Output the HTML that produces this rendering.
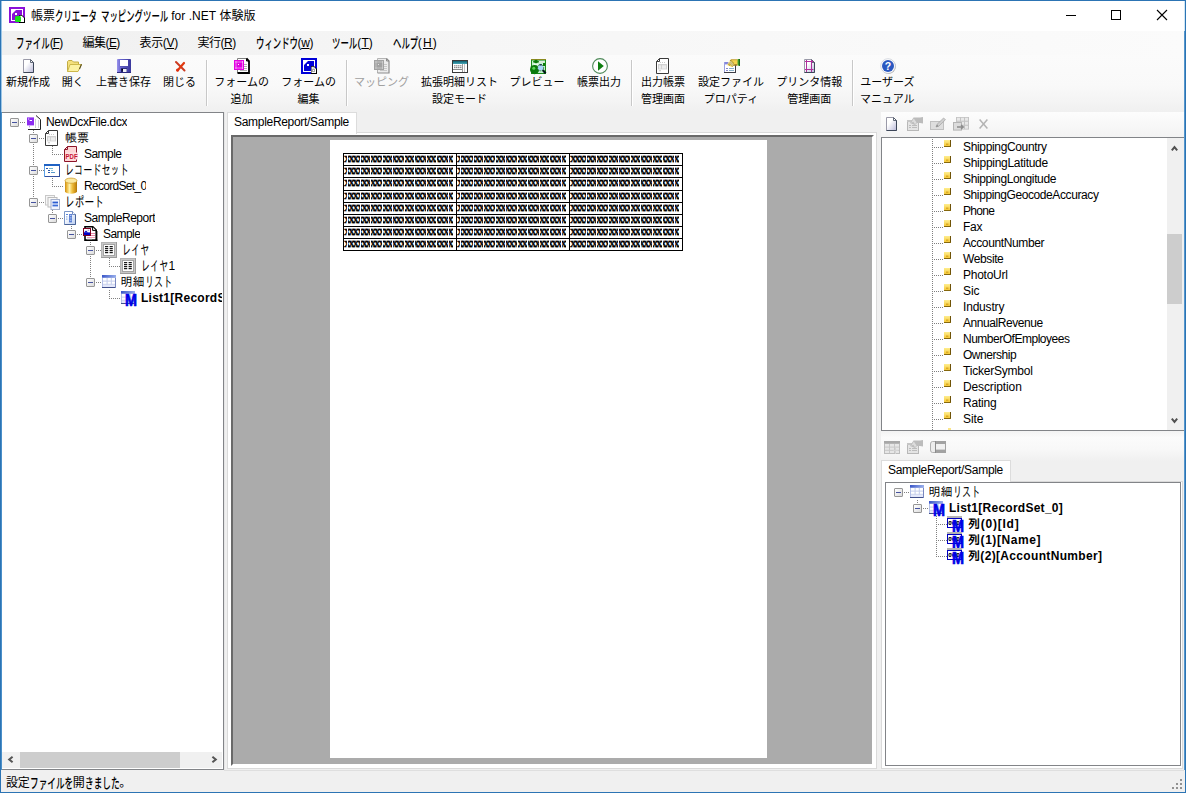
<!DOCTYPE html>
<html lang="ja"><head><meta charset="utf-8"><title>帳票クリエータ マッピングツール for .NET 体験版</title>
<style>
*{box-sizing:border-box;margin:0;padding:0}
html,body{width:1186px;height:793px;overflow:hidden;background:#f0f0f0}
body{position:relative;font-family:"Liberation Sans","Noto Sans CJK JP",sans-serif;font-size:12px;color:#000}
.a{position:absolute}
.t{position:absolute;white-space:nowrap;line-height:16px;height:16px}
.ui{font-family:"Liberation Sans","Noto Sans CJK JP",sans-serif;font-size:12px}
.km{font-weight:500}
.tb{font-family:"Liberation Sans","Noto Sans CJK JP",sans-serif;font-size:11px}
.g{font-family:"Liberation Sans","IPAGothic","Noto Sans CJK JP",sans-serif;font-size:12px}
.b{font-weight:bold}
.k{display:inline-block;transform-origin:0 50%;letter-spacing:0}
u{text-decoration:underline;text-underline-offset:1px}
svg{position:absolute;overflow:visible}
.dot-h{position:absolute;height:1px;background-image:linear-gradient(90deg,#808080 50%,transparent 50%);background-size:2px 1px}
.dot-v{position:absolute;width:1px;background-image:linear-gradient(180deg,#808080 50%,transparent 50%);background-size:1px 2px}
.exp{position:absolute;width:9px;height:9px;border:1px solid #969696;background:linear-gradient(135deg,#fff,#dcdcdc);border-radius:1px}
.xc{position:absolute;height:10px;overflow:hidden;white-space:nowrap;font-family:"Liberation Serif",serif;font-weight:bold;font-size:9px;line-height:9px;letter-spacing:-2.2px;color:#000;-webkit-text-stroke:.4px #000}
.xc:after{content:"";position:absolute;left:0;top:0;right:0;bottom:0;background:repeating-linear-gradient(90deg,transparent 0,transparent 3.5px,#fff 3.5px,#fff 4.5px,transparent 4.5px,transparent 16px,#fff 16px,#fff 17px,transparent 17px,transparent 22.1px)}
.exp:after{content:"";position:absolute;left:1px;top:3px;width:5px;height:1px;background:#46539f}
</style></head>
<body>
<div class="a" style="left:0px;top:0px;width:1186px;height:793px;background:#f0f0f0;border:1px solid #2c74b4;"></div>
<div class="a" style="left:1px;top:1px;width:1184px;height:791px;background:transparent;border:1px solid #d9f3fc;border-top:none;border-bottom-color:#b4daf2;"></div>
<div class="a" style="left:1px;top:1px;width:1184px;height:30px;background:#fff;"></div>
<svg style="left:9px;top:7px" width="16" height="16" viewBox="0 0 16 16"><rect x="0" y="0" width="16" height="16" fill="#8a10d8"/><rect x="2" y="2" width="12" height="12" fill="#fff"/><rect x="3" y="3" width="10" height="10" fill="#8a10d8"/><path d="M3 3h4l-4 4z" fill="#fff"/><rect x="6" y="6" width="2" height="2" fill="#fff"/><path d="M10 8h3l3 3v5h-6z" fill="#000"/><path d="M10.5 8.8h2.2l2.3 2.3v4h-4.5z" fill="#fff"/><rect x="6" y="9" width="6" height="6" rx="1.5" fill="#18e018"/></svg>
<div class="t ui" style="left:31px;top:8px;letter-spacing:0.055px;">帳票<span class="k km" style="transform:translateY(0.3px) scale(0.7,1.15);margin-right:-18.00px">クリエータ</span> <span class="k km" style="transform:translateY(0.3px) scale(0.7,1.15);margin-right:-28.80px">マッピングツール</span> for .NET 体験版</div>
<svg style="left:1066px;top:10px" width="56" height="10" viewBox="0 0 56 10" shape-rendering="crispEdges"><rect x="0" y="5" width="10" height="1" fill="#000"/><rect x="45.5" y="0.5" width="9" height="9" fill="none" stroke="#000"/></svg>
<svg style="left:1157px;top:10px" width="10" height="10" viewBox="0 0 10 10"><path d="M0 0L10 10M10 0L0 10" stroke="#000" stroke-width="1.1"/></svg>
<div class="a" style="left:1px;top:31px;width:1184px;height:24px;background:linear-gradient(90deg,#f0f0f0,#f6f6f6 40%,#fbfbfb);"></div>
<div class="t ui" style="left:16px;top:35px;letter-spacing:-0.823px;"><span class="k km" style="transform:translateY(0.3px) scale(0.7,1.15);margin-right:-14.40px">ファイル</span>(<u>F</u>)</div>
<div class="t ui" style="left:82.5px;top:35px;letter-spacing:-0.543px;">編集(<u>E</u>)</div>
<div class="t ui" style="left:139.5px;top:35px;letter-spacing:-0.343px;">表示(<u>V</u>)</div>
<div class="t ui" style="left:197.5px;top:35px;letter-spacing:-0.474px;">実行(<u>R</u>)</div>
<div class="t ui" style="left:255.5px;top:35px;letter-spacing:-0.362px;"><span class="k km" style="transform:translateY(0.3px) scale(0.7,1.15);margin-right:-18.00px">ウィンドウ</span>(<u>w</u>)</div>
<div class="t ui" style="left:332px;top:35px;letter-spacing:0.146px;"><span class="k km" style="transform:translateY(0.3px) scale(0.7,1.15);margin-right:-10.80px">ツール</span>(<u>T</u>)</div>
<div class="t ui" style="left:392.5px;top:35px;letter-spacing:1.203px;"><span class="k km" style="transform:translateY(0.3px) scale(0.7,1.15);margin-right:-10.80px">ヘルプ</span>(<u>H</u>)</div>
<div class="a" style="left:1px;top:55px;width:1184px;height:56px;background:linear-gradient(#fbfbfb,#f9f9f9 55%,#f4f4f4 82%,#f0f0f0);"></div>
<div class="a" style="left:206px;top:60px;width:1px;height:46px;background:#c8c8c8;"></div>
<div class="a" style="left:207px;top:60px;width:1px;height:46px;background:#ffffff;"></div>
<div class="a" style="left:346px;top:60px;width:1px;height:46px;background:#c8c8c8;"></div>
<div class="a" style="left:347px;top:60px;width:1px;height:46px;background:#ffffff;"></div>
<div class="a" style="left:631px;top:60px;width:1px;height:46px;background:#c8c8c8;"></div>
<div class="a" style="left:632px;top:60px;width:1px;height:46px;background:#ffffff;"></div>
<div class="a" style="left:852px;top:60px;width:1px;height:46px;background:#c8c8c8;"></div>
<div class="a" style="left:853px;top:60px;width:1px;height:46px;background:#ffffff;"></div>
<div class="t tb" style="left:-32px;top:74px;width:120px;text-align:center;">新規作成</div>
<svg style="left:23px;top:59px" width="11" height="14" viewBox="0 0 11 14"><defs><linearGradient id="gn1" x1="0" y1="0" x2="1" y2="1"><stop offset="0.35" stop-color="#fff"/><stop offset="1" stop-color="#b8b8d8"/></linearGradient></defs><path d="M0.5 0.5H7.5L10.5 3.5V13.5H0.5Z" fill="url(#gn1)" stroke="#9a9aa8"/><path d="M7.5 0.5L10.5 3.5V13.5H0.5" fill="none" stroke="#3c4658"/><path d="M7.5 1v2.5H10" fill="#fff" stroke="#3c4658" stroke-width=".8"/></svg>
<div class="t tb" style="left:12.700000000000003px;top:74px;width:120px;text-align:center;">開く</div>
<svg style="left:67px;top:60px" width="15" height="12" viewBox="0 0 15 12"><path d="M0.5 11.5V1.5L1.5 0.5H5L6.5 2H11.5V4" fill="#f4e07c" stroke="#c2ac44"/><path d="M0.5 11.5L3 4.5H14.5L11 11.5Z" fill="#fcf2a2" stroke="#cdb84a"/><path d="M14.5 4.2L12.5 9" stroke="#5a5020" stroke-width="1.1"/></svg>
<div class="t tb" style="left:63.5px;top:74px;width:120px;text-align:center;">上書き保存</div>
<svg style="left:117px;top:59px" width="14" height="14" viewBox="0 0 14 14"><defs><linearGradient id="gs1" x1="0" y1="0" x2="1" y2="0"><stop offset="0" stop-color="#9a94ec"/><stop offset="0.25" stop-color="#6a66d0"/><stop offset="1" stop-color="#3a389c"/></linearGradient></defs><rect x="0" y="0" width="14" height="14" rx="0.8" fill="url(#gs1)"/><rect x="0" y="13" width="14" height="1" fill="#2c2a80"/><rect x="3" y="1" width="8" height="6" fill="#fff"/><rect x="3" y="7" width="8" height="0.6" fill="#5050b0"/><rect x="4" y="9.3" width="6" height="3.7" fill="#20206a"/><rect x="6" y="10" width="3.6" height="3" fill="#f0f0f8"/><rect x="4.6" y="9.8" width="1.4" height="1.6" fill="#000"/></svg>
<div class="t tb" style="left:119.6px;top:74px;width:120px;text-align:center;">閉じる</div>
<svg style="left:175px;top:61px" width="10" height="11" viewBox="0 0 10 11"><path d="M1 1L9.5 9.5" stroke="#cc3a20" stroke-width="2" stroke-linecap="round"/><path d="M9 2L2.5 9.5" stroke="#e03a10" stroke-width="2.2" stroke-linecap="round"/><circle cx="2.6" cy="9" r="1.6" fill="#e03010"/></svg>
<div class="t tb" style="left:181.6px;top:74px;width:120px;text-align:center;">フォームの</div>
<div class="t tb" style="left:181.6px;top:91px;width:120px;text-align:center;">追加</div>
<svg style="left:234px;top:58px" width="16" height="16" viewBox="0 0 16 16"><path d="M3.5 0.5H12.5L15 3V15H3.5Z" fill="#fff"/><path d="M3.5 15V0.5H12.5" fill="none" stroke="#808080"/><path d="M12.5 0.5L15 3V15H3.5" fill="none" stroke="#000" stroke-width="1.8"/><path d="M12.5 0.5V3H15" fill="none" stroke="#000"/><rect x="10" y="6" width="3" height="1" fill="#b0b0b0"/><rect x="10" y="8" width="3" height="1" fill="#b0b0b0"/><rect x="10" y="10" width="3" height="1" fill="#b0b0b0"/><rect x="10" y="12" width="3" height="1" fill="#b0b0b0"/><rect x="6" y="12" width="4" height="1" fill="#b0b0b0"/><rect x="0" y="2" width="10" height="10" fill="#e200e2"/><rect x="1.5" y="3.5" width="1" height="1" fill="#fff"/><rect x="1.5" y="9.5" width="1" height="1" fill="#fff"/><rect x="1.5" y="3.5" width="1" height="1" fill="#fff"/><rect x="8" y="3.5" width="1" height="1" fill="#fff"/><rect x="3.5" y="3.5" width="1" height="1" fill="#fff"/><rect x="3.5" y="9.5" width="1" height="1" fill="#fff"/><rect x="1.5" y="5.5" width="1" height="1" fill="#fff"/><rect x="8" y="5.5" width="1" height="1" fill="#fff"/><rect x="5.5" y="3.5" width="1" height="1" fill="#fff"/><rect x="5.5" y="9.5" width="1" height="1" fill="#fff"/><rect x="1.5" y="7.5" width="1" height="1" fill="#fff"/><rect x="8" y="7.5" width="1" height="1" fill="#fff"/><rect x="7.5" y="3.5" width="1" height="1" fill="#fff"/><rect x="7.5" y="9.5" width="1" height="1" fill="#fff"/><rect x="1.5" y="9.5" width="1" height="1" fill="#fff"/><rect x="8" y="9.5" width="1" height="1" fill="#fff"/><rect x="4" y="6" width="1" height="1" fill="#fff"/></svg>
<div class="t tb" style="left:248.60000000000002px;top:74px;width:120px;text-align:center;">フォームの</div>
<div class="t tb" style="left:248.60000000000002px;top:91px;width:120px;text-align:center;">編集</div>
<svg style="left:301px;top:58px" width="16" height="16" viewBox="0 0 16 16"><rect x="0" y="0" width="16" height="16" fill="#0000d8"/><rect x="2" y="2" width="12" height="12" fill="#fff"/><rect x="3" y="3" width="10" height="10" fill="#0000d8"/><path d="M3 3h4l-4 4z" fill="#fff"/><rect x="6" y="6" width="2" height="2" fill="#fff"/><path d="M10 8h3l3 3v5h-6z" fill="#000"/><path d="M10.5 8.8h2.2l2.3 2.3v4h-4.5z" fill="#fff"/><rect x="11" y="11" width="3" height="3" fill="#a8a8a8"/><rect x="12" y="12" width="1" height="1" fill="#fff"/><rect x="11.5" y="9.5" width="2" height="1" fill="#a8a8a8"/></svg>
<div class="t tb" style="left:321.6px;top:74px;width:120px;text-align:center;color:#a0a0a0;">マッピング</div>
<svg style="left:374px;top:58px" width="16" height="16" viewBox="0 0 16 16"><path d="M3.5 0.5H12.5L15 3V15H3.5Z" fill="#ececec"/><path d="M3.5 15V0.5H12.5" fill="none" stroke="#b4b4b4"/><path d="M12.5 0.5L15 3V15H3.5" fill="none" stroke="#8c8c8c" stroke-width="1.2"/><path d="M12.5 0.5V3H15" fill="none" stroke="#8c8c8c"/><rect x="10" y="6" width="3" height="1" fill="#c8c8c8"/><rect x="10" y="8" width="3" height="1" fill="#c8c8c8"/><rect x="10" y="10" width="3" height="1" fill="#c8c8c8"/><rect x="10" y="12" width="3" height="1" fill="#c8c8c8"/><rect x="6" y="12" width="4" height="1" fill="#c8c8c8"/><rect x="0" y="2" width="10" height="10" fill="#a2a2a2"/><rect x="1.5" y="3.5" width="1" height="1" fill="#e4e4e4"/><rect x="1.5" y="9.5" width="1" height="1" fill="#e4e4e4"/><rect x="1.5" y="3.5" width="1" height="1" fill="#e4e4e4"/><rect x="8" y="3.5" width="1" height="1" fill="#e4e4e4"/><rect x="3.5" y="3.5" width="1" height="1" fill="#e4e4e4"/><rect x="3.5" y="9.5" width="1" height="1" fill="#e4e4e4"/><rect x="1.5" y="5.5" width="1" height="1" fill="#e4e4e4"/><rect x="8" y="5.5" width="1" height="1" fill="#e4e4e4"/><rect x="5.5" y="3.5" width="1" height="1" fill="#e4e4e4"/><rect x="5.5" y="9.5" width="1" height="1" fill="#e4e4e4"/><rect x="1.5" y="7.5" width="1" height="1" fill="#e4e4e4"/><rect x="8" y="7.5" width="1" height="1" fill="#e4e4e4"/><rect x="7.5" y="3.5" width="1" height="1" fill="#e4e4e4"/><rect x="7.5" y="9.5" width="1" height="1" fill="#e4e4e4"/><rect x="1.5" y="9.5" width="1" height="1" fill="#e4e4e4"/><rect x="8" y="9.5" width="1" height="1" fill="#e4e4e4"/><rect x="4" y="6" width="1" height="1" fill="#e4e4e4"/></svg>
<div class="t tb" style="left:399.4px;top:74px;width:120px;text-align:center;">拡張明細リスト</div>
<div class="t tb" style="left:399.4px;top:91px;width:120px;text-align:center;">設定モード</div>
<svg style="left:452px;top:60px" width="16" height="13" viewBox="0 0 16 13"><defs><linearGradient id="ge1" x1="0" y1="0" x2="0" y2="1"><stop offset="0" stop-color="#0f5f70"/><stop offset="1" stop-color="#48a8b8"/></linearGradient></defs><rect x="0" y="0" width="16" height="13" fill="#3a3a3a"/><rect x="1" y="1" width="14" height="3" fill="url(#ge1)"/><rect x="1" y="4" width="14" height="8" fill="#fff"/><rect x="1" y="9" width="10" height="1" fill="#8a8a8a"/><rect x="10" y="4" width="1" height="8" fill="#9a9a9a"/><rect x="12" y="4" width="1" height="8" fill="#c0c0c0"/><rect x="2.2" y="5.2" width="1.2" height="1.2" fill="#707070"/><rect x="2.2" y="7" width="1.2" height="1.2" fill="#707070"/><rect x="4.2" y="5.2" width="1.2" height="1.2" fill="#707070"/><rect x="4.2" y="7" width="1.2" height="1.2" fill="#707070"/><rect x="6.2" y="5.2" width="1.2" height="1.2" fill="#707070"/><rect x="6.2" y="7" width="1.2" height="1.2" fill="#707070"/><rect x="8.2" y="5.2" width="1.2" height="1.2" fill="#707070"/><rect x="8.2" y="7" width="1.2" height="1.2" fill="#707070"/></svg>
<div class="t tb" style="left:477.1px;top:74px;width:120px;text-align:center;">プレビュー</div>
<svg style="left:530px;top:59px" width="16" height="15" viewBox="0 0 16 15"><rect x="1" y="0" width="15" height="15" fill="#1a8a1a"/><rect x="2" y="1.5" width="13" height="12.5" fill="#c4f4d0"/><rect x="1" y="0" width="15" height="1" fill="#8a8a20"/><rect x="9" y="2" width="5" height="1.5" fill="#e0e8e0"/><circle cx="6" cy="2.6" r="1.9" fill="#0c7a0c"/><rect x="3" y="2.2" width="6" height="1.2" fill="#0c7a0c"/><rect x="4" y="4.6" width="4" height="1" fill="#fff"/><circle cx="4.6" cy="10.6" r="4.6" fill="#0c7a0c"/><circle cx="3.8" cy="9.2" r="1.5" fill="#58d858"/><circle cx="10.6" cy="8.8" r="3" fill="#a8d4fa" stroke="#0c600c" stroke-width=".8" stroke-dasharray="1.2 1"/><rect x="9.2" y="5.3" width="2.8" height="1" fill="#001030"/><path d="M12.8 11L15.6 14.4" stroke="#001818" stroke-width="2.2"/><rect x="13" y="4" width="2" height="3" fill="#0c7a0c"/></svg>
<div class="t tb" style="left:539px;top:74px;width:120px;text-align:center;">帳票出力</div>
<svg style="left:592px;top:58px" width="16" height="16" viewBox="0 0 16 16"><circle cx="8" cy="8" r="7.4" fill="#fff" stroke="#4f8a5a" stroke-width="1.1"/><path d="M6 3.2V12.8L11.8 8Z" fill="#0f7f10"/></svg>
<div class="t tb" style="left:603px;top:74px;width:120px;text-align:center;">出力帳票</div>
<div class="t tb" style="left:603px;top:91px;width:120px;text-align:center;">管理画面</div>
<svg style="left:656px;top:58px" width="13" height="16" viewBox="0 0 13 16"><path d="M3.5 0.5H12.5V15.5H0.5V3.5Z" fill="#fff" stroke="#3a3a3a"/><path d="M3.5 0.5V3.5H0.5" fill="none" stroke="#3a3a3a"/><rect x="2" y="6" width="9" height="5.4" fill="#d2d2d2"/><rect x="3" y="7.6" width="2" height="1" fill="#fff"/><rect x="6" y="7.6" width="4" height="1" fill="#fff"/><rect x="3" y="9.4" width="2" height="1" fill="#fff"/><rect x="6" y="9.4" width="4" height="1" fill="#fff"/><rect x="4" y="4" width="1" height="0.8" fill="#c0c0c0"/><rect x="6" y="4" width="1" height="0.8" fill="#c0c0c0"/><rect x="8" y="4" width="1" height="0.8" fill="#c0c0c0"/><rect x="3" y="12.4" width="2" height="0.8" fill="#b8b8b8"/></svg>
<div class="t tb" style="left:671px;top:74px;width:120px;text-align:center;">設定ファイル</div>
<div class="t tb" style="left:671px;top:91px;width:120px;text-align:center;">プロパティ</div>
<svg style="left:724px;top:59px" width="16" height="14" viewBox="0 0 16 14"><rect x="0" y="3" width="12" height="11" fill="#fff"/><rect x="0" y="3" width="12" height="2.4" fill="#8486dc"/><rect x="0" y="3" width="1" height="11" fill="#9aa0e0"/><rect x="11" y="5" width="1" height="9" fill="#3c3c44"/><rect x="0" y="13" width="12" height="1" fill="#3c3c44"/><rect x="2" y="9" width="2" height="1" fill="#8a8ac8"/><rect x="5" y="9" width="5" height="1" fill="#8ab0c8"/><rect x="2" y="11" width="2" height="1" fill="#8a8ac8"/><rect x="5" y="11" width="5" height="1" fill="#8ab0c8"/><path d="M3 6L6.5 0.4H13L14 0.2V6.6L13 6.4H10L8 8Z" fill="#f4d24e"/><path d="M7 0.4H13V1.2H7Z" fill="#b89030"/><path d="M9.6 6.4H13V5.6H10.4Z" fill="#6a4a10"/><path d="M3 6L6.2 0.8L9.6 5.4L8 7.6L6 4.6Z" fill="#fff4c0"/><rect x="4" y="4.6" width="0.9" height="0.9" fill="#8a7a20"/><rect x="5" y="3.6" width="0.9" height="0.9" fill="#8a7a20"/><rect x="6" y="2.6" width="0.9" height="0.9" fill="#8a7a20"/><rect x="5" y="5.6" width="0.9" height="0.9" fill="#8a7a20"/><rect x="6" y="4.6" width="0.9" height="0.9" fill="#8a7a20"/><rect x="7" y="3.6" width="0.9" height="0.9" fill="#8a7a20"/><rect x="7" y="1.6" width="0.9" height="0.9" fill="#8a7a20"/><rect x="8" y="2.6" width="0.9" height="0.9" fill="#8a7a20"/><rect x="6" y="0.9999999999999999" width="0.9" height="0.9" fill="#8a7a20"/><rect x="7" y="5.6" width="0.9" height="0.9" fill="#8a7a20"/><rect x="8" y="4.6" width="0.9" height="0.9" fill="#8a7a20"/><rect x="9" y="3.6" width="0.9" height="0.9" fill="#8a7a20"/><rect x="8" y="6.6" width="0.9" height="0.9" fill="#8a7a20"/><rect x="9" y="5.6" width="0.9" height="0.9" fill="#8a7a20"/><path d="M13.6 0L16 0V7L13.6 6.6Z" fill="#3a9a2a"/><path d="M15.2 0H16V7H15.2Z" fill="#1c5c18"/></svg>
<div class="t tb" style="left:749.2px;top:74px;width:120px;text-align:center;">プリンタ情報</div>
<div class="t tb" style="left:749.2px;top:91px;width:120px;text-align:center;">管理画面</div>
<svg style="left:804px;top:59px" width="11" height="14" viewBox="0 0 11 14"><defs><linearGradient id="gn2" x1="0" y1="0" x2="1" y2="1"><stop offset="0.35" stop-color="#fff"/><stop offset="1" stop-color="#b8b8d8"/></linearGradient></defs><path d="M0.5 0.5H7.5L10.5 3.5V13.5H0.5Z" fill="url(#gn2)" stroke="#9a9aa8"/><path d="M7.5 0.5L10.5 3.5V13.5H0.5" fill="none" stroke="#3c4658"/><path d="M7.5 1v2.5H10" fill="#fff" stroke="#3c4658" stroke-width=".8"/></svg>
<svg style="left:804px;top:59px" width="11" height="14" viewBox="0 0 11 14"><rect x="2" y="1" width="1" height="12" fill="#b0309c"/><rect x="7" y="1" width="1" height="12" fill="#b0309c"/><rect x="1" y="2" width="8.5" height="1" fill="#b0309c"/><rect x="1" y="10" width="8.5" height="1" fill="#b0309c"/></svg>
<div class="t tb" style="left:827.3px;top:74px;width:120px;text-align:center;">ユーザーズ</div>
<div class="t tb" style="left:827.3px;top:91px;width:120px;text-align:center;">マニュアル</div>
<svg style="left:880px;top:58px" width="16" height="16" viewBox="0 0 16 16"><circle cx="8.5" cy="8.6" r="7.3" fill="#8c8c8c" opacity=".75"/><circle cx="8" cy="8" r="7.3" fill="#fff" stroke="#c0c4d0" stroke-width=".6"/><circle cx="8" cy="8" r="6" fill="#2a58c0"/><text x="8" y="11.9" font-family="Liberation Sans,sans-serif" font-weight="bold" font-size="10.5" fill="#fff" text-anchor="middle">?</text></svg>
<div class="a" style="left:1px;top:112px;width:223px;height:658px;background:#fff;border:1px solid #828488;border-left:none;"></div>
<div class="a" style="left:2px;top:752px;width:220px;height:16px;background:#f0f0f0;"></div>
<div class="a" style="left:20px;top:752px;width:160px;height:16px;background:#cdcdcd;"></div>
<svg style="left:6px;top:754px" width="10" height="10" viewBox="0 0 10 10"><path d="M6.6 2.7L3.2 5.5L6.6 8.3" fill="none" stroke="#555" stroke-width="2"/></svg>
<svg style="left:209px;top:754px" width="10" height="10" viewBox="0 0 10 10"><path d="M3.4 2.7L6.8 5.5L3.4 8.3" fill="none" stroke="#555" stroke-width="2"/></svg>
<div class="dot-h" style="left:20px;top:122px;width:6px"></div>
<div class="exp" style="left:10px;top:118px"></div>
<svg style="left:27px;top:115px" width="14" height="15" viewBox="0 0 14 15"><path d="M9 0.5L13.5 4.5V14.5H1" fill="#fff" stroke="#222"/><rect x="8" y="4" width="1" height="9" fill="#d0d0d8"/><rect x="11" y="5" width="1" height="8" fill="#d0d0d8"/><rect x="0" y="2.4" width="7" height="8" fill="#8c2cf0"/><rect x="1" y="3.4" width="1.2" height="1.2" fill="#e8d0ff"/><rect x="2.6" y="5" width="2.4" height="1" fill="#fff"/><rect x="2" y="10.4" width="1" height="2" fill="#c8a0f8"/></svg>
<div class="t g" style="left:46px;top:114px;letter-spacing:-0.344px;max-width:176px;overflow:hidden;">NewDcxFile.dcx</div>
<div class="dot-h" style="left:39px;top:138px;width:6px"></div>
<div class="exp" style="left:29px;top:134px"></div>
<svg style="left:45px;top:130px" width="13" height="16" viewBox="0 0 13 16"><path d="M3.5 0.5H12.5V15.5H0.5V3.5Z" fill="#fff" stroke="#3a3a3a"/><path d="M3.5 0.5V3.5H0.5" fill="none" stroke="#3a3a3a"/><rect x="2" y="6" width="9" height="5.4" fill="#d2d2d2"/><rect x="3" y="7.6" width="2" height="1" fill="#fff"/><rect x="6" y="7.6" width="4" height="1" fill="#fff"/><rect x="3" y="9.4" width="2" height="1" fill="#fff"/><rect x="6" y="9.4" width="4" height="1" fill="#fff"/><rect x="4" y="4" width="1" height="0.8" fill="#c0c0c0"/><rect x="6" y="4" width="1" height="0.8" fill="#c0c0c0"/><rect x="8" y="4" width="1" height="0.8" fill="#c0c0c0"/><rect x="3" y="12.4" width="2" height="0.8" fill="#b8b8b8"/></svg>
<div class="t g" style="left:65px;top:130px;max-width:157px;overflow:hidden;">帳票</div>
<div class="dot-h" style="left:52px;top:154px;width:12px"></div>
<svg style="left:64px;top:146px" width="14" height="16" viewBox="0 0 14 16"><path d="M3.5 0.5H12.5V15.5H0.5V3.5Z" fill="#fdd6d6" stroke="#8c1428"/><path d="M3.5 0.5V3.5H0.5" fill="none" stroke="#8c1428"/><rect x="2" y="6.5" width="12" height="7" fill="#fde0e0"/><text x="1.6" y="13.2" font-family="Liberation Sans,sans-serif" font-weight="bold" font-size="7.2" fill="#c81030" textLength="12" lengthAdjust="spacingAndGlyphs">PDF</text></svg>
<div class="t g" style="left:84px;top:146px;letter-spacing:-0.531px;max-width:138px;overflow:hidden;">Sample</div>
<div class="dot-h" style="left:39px;top:170px;width:6px"></div>
<div class="exp" style="left:29px;top:166px"></div>
<svg style="left:44px;top:164px" width="16" height="13" viewBox="0 0 16 13"><rect x="0" y="0" width="16" height="13" fill="#5aa0e6"/><rect x="1" y="2" width="14" height="10" fill="#fff"/><rect x="0" y="0" width="16" height="2" fill="#1f62c4"/><rect x="15" y="2" width="1" height="11" fill="#34509c"/><rect x="1" y="12" width="15" height="1" fill="#34509c"/><rect x="2" y="4" width="2" height="1" fill="#2a56a8"/><rect x="5" y="4" width="4" height="1" fill="#70b8d0"/><rect x="4" y="6" width="2" height="1" fill="#2a56a8"/><rect x="7" y="6" width="2" height="1" fill="#90c8e0"/><rect x="4" y="8" width="2" height="1" fill="#2a56a8"/><rect x="7" y="8" width="4" height="1" fill="#5898c8"/></svg>
<div class="t g" style="left:65px;top:162px;max-width:157px;overflow:hidden;"><span class="k" style="transform:translateY(0.6px) scale(0.76,1.18);margin-right:-20.16px">レコードセット</span></div>
<div class="dot-h" style="left:52px;top:186px;width:12px"></div>
<svg style="left:65px;top:178px" width="12" height="16" viewBox="0 0 12 16"><defs><linearGradient id="gdb65" x1="0" y1="0" x2="1" y2="0"><stop offset="0" stop-color="#c88c14"/><stop offset="0.12" stop-color="#e8b030"/><stop offset="0.38" stop-color="#fff2ac"/><stop offset="0.6" stop-color="#f0c040"/><stop offset="0.9" stop-color="#c88a10"/><stop offset="1" stop-color="#a87408"/></linearGradient></defs><path d="M0 2.6V13.2A6 2.6 0 0 0 12 13.2V2.6Z" fill="url(#gdb65)"/><ellipse cx="6" cy="2.7" rx="6" ry="2.6" fill="#fbe9a0" stroke="#d0a030" stroke-width=".8"/></svg>
<div class="t g" style="left:84px;top:178px;letter-spacing:-0.695px;max-width:138px;overflow:hidden;">RecordSet_0</div>
<div class="dot-h" style="left:39px;top:202px;width:6px"></div>
<div class="exp" style="left:29px;top:198px"></div>
<svg style="left:45px;top:195px" width="16" height="16" viewBox="0 0 16 16"><rect x="0" y="0" width="9.5" height="10" fill="#f6f6f6"/><rect x="0.5" y="0.5" width="9" height="9.5" fill="none" stroke="#c8c8c8"/><rect x="2.5" y="2" width="9.5" height="10" fill="#f8f8f8"/><rect x="3" y="2.5" width="9" height="9.5" fill="none" stroke="#bcbcbc"/><rect x="6" y="4.5" width="8.5" height="10" fill="#f2f5ff" stroke="#a4b0cc"/><rect x="7.5" y="6.6" width="5.5" height="1.8" fill="#2c5cd0"/><rect x="7.5" y="9.6" width="5.5" height="1.8" fill="#3c6cd8"/></svg>
<div class="t g" style="left:65px;top:194px;max-width:157px;overflow:hidden;"><span class="k" style="transform:translateY(0.6px) scale(0.81,1.18);margin-right:-9.12px">レポート</span></div>
<div class="dot-h" style="left:58px;top:218px;width:6px"></div>
<div class="exp" style="left:48px;top:214px"></div>
<svg style="left:64px;top:211px" width="12" height="14" viewBox="0 0 12 14"><defs><linearGradient id="gsr" x1="0" y1="0" x2="1" y2="1"><stop offset="0.3" stop-color="#fff"/><stop offset="1" stop-color="#b8ccf0"/></linearGradient></defs><path d="M0.5 0.5H8.5L11.5 3.5V13.5H0.5Z" fill="url(#gsr)" stroke="#7a96c8"/><path d="M8.5 0.5V3.5H11.5" fill="#fff" stroke="#5070b0" stroke-width=".8"/><path d="M11.5 3.5V13.5H0.5" fill="none" stroke="#4a6498"/><rect x="2" y="3" width="2" height="1" fill="#5a86d8"/><rect x="2" y="5.4" width="1.4" height="1" fill="#7aa0e0"/><rect x="2" y="7.6" width="1.4" height="1" fill="#7aa0e0"/><rect x="5" y="3" width="3" height="8.4" fill="#5c80d4"/><rect x="5.8" y="4" width="1.6" height="1" fill="#b0c8f4"/><rect x="5.8" y="6.4" width="1.6" height="1" fill="#b0c8f4"/><rect x="5.8" y="8.8" width="1.6" height="1" fill="#b0c8f4"/></svg>
<div class="t g" style="left:84px;top:210px;letter-spacing:-0.460px;max-width:138px;overflow:hidden;">SampleReport</div>
<div class="dot-h" style="left:77px;top:234px;width:6px"></div>
<div class="exp" style="left:67px;top:230px"></div>
<svg style="left:83px;top:226px" width="15" height="16" viewBox="0 0 15 16"><path d="M2 0.8H9.8L13.2 4.2V14.2H2Z" fill="#fff" stroke="#000" stroke-width="1.6"/><path d="M9.6 1V4.4H13" fill="#fff" stroke="#000"/><rect x="2" y="13.6" width="12.4" height="1.4" fill="#000"/><rect x="13" y="5" width="1.4" height="10" fill="#000"/><rect x="8" y="7" width="4" height="1" fill="#e888a8"/><rect x="8" y="9" width="4" height="1" fill="#e888a8"/><rect x="4" y="11" width="8" height="1" fill="#f0a0b8"/><rect x="4" y="12.6" width="5" height="0.8" fill="#c8c8c8"/><rect x="0" y="2" width="8" height="8" fill="#7c0020"/><rect x="1" y="3" width="6" height="6" fill="#fff"/><rect x="1" y="6.4" width="6" height="2.6" fill="#0000c4"/><path d="M1 6.6L3 4.6L5 6.6Z" fill="#0000c4"/><rect x="4.6" y="3.6" width="1.6" height="1.4" fill="#b0b0e0"/></svg>
<div class="t g" style="left:103px;top:226px;letter-spacing:-0.565px;max-width:119px;overflow:hidden;">Sample</div>
<div class="dot-h" style="left:96px;top:250px;width:6px"></div>
<div class="exp" style="left:86px;top:246px"></div>
<svg style="left:101px;top:242px" width="16" height="16" viewBox="0 0 16 16"><rect x="0" y="0" width="16" height="16" fill="#9c9c9c"/><rect x="1" y="1" width="14" height="14" fill="#c8c8c8"/><rect x="2" y="2" width="12" height="12" fill="#a4a4a4"/><rect x="3" y="3" width="10" height="10" fill="#fff"/><rect x="0" y="0" width="15" height="1" fill="#b4b4b4"/><rect x="0" y="0" width="1" height="15" fill="#b4b4b4"/><rect x="4" y="4.1" width="3.2" height="1.1" fill="#000"/><rect x="8.6" y="4.1" width="3.2" height="1.1" fill="#000"/><rect x="4" y="6.1" width="3.2" height="1.1" fill="#000"/><rect x="8.6" y="6.1" width="3.2" height="1.1" fill="#000"/><rect x="4" y="8.1" width="3.2" height="1.1" fill="#000"/><rect x="8.6" y="8.1" width="3.2" height="1.1" fill="#000"/><rect x="4" y="10.1" width="3.2" height="1.1" fill="#000"/><rect x="8.6" y="10.1" width="3.2" height="1.1" fill="#000"/></svg>
<div class="t g" style="left:122px;top:242px;max-width:100px;overflow:hidden;"><span class="k" style="transform:translateY(0.6px) scale(0.76,1.18);margin-right:-8.64px">レイヤ</span></div>
<div class="dot-h" style="left:109px;top:266px;width:12px"></div>
<svg style="left:120px;top:258px" width="16" height="16" viewBox="0 0 16 16"><rect x="0" y="0" width="16" height="16" fill="#9c9c9c"/><rect x="1" y="1" width="14" height="14" fill="#c8c8c8"/><rect x="2" y="2" width="12" height="12" fill="#a4a4a4"/><rect x="3" y="3" width="10" height="10" fill="#fff"/><rect x="0" y="0" width="15" height="1" fill="#b4b4b4"/><rect x="0" y="0" width="1" height="15" fill="#b4b4b4"/><rect x="4" y="4.1" width="3.2" height="1.1" fill="#000"/><rect x="8.6" y="4.1" width="3.2" height="1.1" fill="#000"/><rect x="4" y="6.1" width="3.2" height="1.1" fill="#000"/><rect x="8.6" y="6.1" width="3.2" height="1.1" fill="#000"/><rect x="4" y="8.1" width="3.2" height="1.1" fill="#000"/><rect x="8.6" y="8.1" width="3.2" height="1.1" fill="#000"/><rect x="4" y="10.1" width="3.2" height="1.1" fill="#000"/><rect x="8.6" y="10.1" width="3.2" height="1.1" fill="#000"/></svg>
<div class="t g" style="left:141px;top:258px;max-width:81px;overflow:hidden;"><span class="k" style="transform:translateY(0.6px) scale(0.76,1.18);margin-right:-8.64px">レイヤ</span>1</div>
<div class="dot-h" style="left:96px;top:282px;width:6px"></div>
<div class="exp" style="left:86px;top:278px"></div>
<svg style="left:102px;top:275px" width="14" height="13" viewBox="0 0 14 13"><defs><linearGradient id="gl102_275" x1="0" y1="0" x2="1" y2="0"><stop offset="0" stop-color="#3a56c8"/><stop offset="1" stop-color="#9ab0ec"/></linearGradient></defs><rect x="0" y="0" width="14" height="13" fill="#b4c0e8"/><rect x="0" y="0" width="14" height="2.6" fill="url(#gl102_275)"/><rect x="1" y="3" width="12" height="9" fill="#fff"/><rect x="0" y="12" width="14" height="1" fill="#42508c"/><rect x="13" y="3" width="1" height="10" fill="#7a88c0"/><rect x="1" y="5.6" width="12" height="1" fill="#c4ccec"/><rect x="1" y="8.8" width="12" height="1" fill="#c4ccec"/><rect x="4.6" y="3" width="1" height="9" fill="#c4ccec"/><rect x="8.8" y="3" width="1" height="9" fill="#c4ccec"/><rect x="1" y="9.8" width="12" height="2.2" fill="#e4e8fa"/></svg>
<div class="t g" style="left:120.5px;top:274px;max-width:100px;overflow:hidden;">明細<span class="k" style="transform:translateY(0.6px) scale(0.76,1.18);margin-right:-8.64px">リスト</span></div>
<div class="dot-h" style="left:109px;top:298px;width:12px"></div>
<svg style="left:121px;top:291px" width="14" height="13" viewBox="0 0 14 13"><defs><linearGradient id="gl121_291" x1="0" y1="0" x2="1" y2="0"><stop offset="0" stop-color="#3a56c8"/><stop offset="1" stop-color="#9ab0ec"/></linearGradient></defs><rect x="0" y="0" width="14" height="13" fill="#b4c0e8"/><rect x="0" y="0" width="14" height="2.6" fill="url(#gl121_291)"/><rect x="1" y="3" width="12" height="9" fill="#fff"/><rect x="0" y="12" width="14" height="1" fill="#42508c"/><rect x="13" y="3" width="1" height="10" fill="#7a88c0"/><rect x="1" y="5.6" width="12" height="1" fill="#c4ccec"/><rect x="1" y="8.8" width="12" height="1" fill="#c4ccec"/><rect x="4.6" y="3" width="1" height="9" fill="#c4ccec"/><rect x="8.8" y="3" width="1" height="9" fill="#c4ccec"/><rect x="1" y="9.8" width="12" height="2.2" fill="#e4e8fa"/></svg>
<svg style="left:125px;top:294px" width="12" height="13" viewBox="0 0 12 13"><text x="0" y="11.8" font-family="Liberation Sans,sans-serif" font-weight="bold" font-size="17.2" fill="#0000e6" stroke="#0000e6" stroke-width=".7" textLength="12" lengthAdjust="spacingAndGlyphs">M</text></svg>
<div class="t g b" style="left:141px;top:290px;letter-spacing:0.257px;max-width:81px;overflow:hidden;">List1[RecordSet_0]</div>
<div class="dot-v" style="left:33px;top:130px;height:4px"></div>
<div class="dot-v" style="left:33px;top:144px;height:22px"></div>
<div class="dot-v" style="left:33px;top:176px;height:22px"></div>
<div class="dot-v" style="left:52px;top:146px;height:9px"></div>
<div class="dot-v" style="left:52px;top:178px;height:9px"></div>
<div class="dot-v" style="left:52px;top:210px;height:4px"></div>
<div class="dot-v" style="left:71px;top:226px;height:4px"></div>
<div class="dot-v" style="left:90px;top:242px;height:4px"></div>
<div class="dot-v" style="left:90px;top:256px;height:22px"></div>
<div class="dot-v" style="left:109px;top:258px;height:9px"></div>
<div class="dot-v" style="left:109px;top:290px;height:9px"></div>
<div class="a" style="left:227px;top:132px;width:650px;height:637px;background:#fff;border:1px solid #dadada;"></div>
<div class="a" style="left:227px;top:112px;width:130px;height:22px;background:#fff;border:1px solid #dcdcdc;border-bottom:none;"></div>
<div class="t g" style="left:234px;top:114px;letter-spacing:-0.302px;">SampleReport/Sample</div>
<div class="a" style="left:231px;top:135px;width:643px;height:631px;background:#ababab;border-top:2px solid #696969;border-left:2px solid #696969;border-right:2px solid #fff;border-bottom:2px solid #fff;"></div>
<div class="a" style="left:330px;top:140px;width:437px;height:618px;background:#fff;"></div>
<div class="a" style="left:343px;top:153px;width:340px;height:98px;background:#fff;border:1px solid #000;"></div>
<div class="a" style="left:456px;top:153px;width:1px;height:98px;background:#000;"></div>
<div class="a" style="left:569px;top:153px;width:1px;height:98px;background:#000;"></div>
<div class="a" style="left:343px;top:165px;width:340px;height:1px;background:#000;"></div>
<div class="a" style="left:343px;top:177px;width:340px;height:1px;background:#000;"></div>
<div class="a" style="left:343px;top:190px;width:340px;height:1px;background:#000;"></div>
<div class="a" style="left:343px;top:202px;width:340px;height:1px;background:#000;"></div>
<div class="a" style="left:343px;top:214px;width:340px;height:1px;background:#000;"></div>
<div class="a" style="left:343px;top:226px;width:340px;height:1px;background:#000;"></div>
<div class="a" style="left:343px;top:238px;width:340px;height:1px;background:#000;"></div>
<div class="xc" style="left:344px;top:154.5px;width:109px">XXXXXXXXXXXXXXXXXXXXXXXXXXXXXXXXXXXXXXXX</div>
<div class="xc" style="left:457px;top:154.5px;width:109px">XXXXXXXXXXXXXXXXXXXXXXXXXXXXXXXXXXXXXXXX</div>
<div class="xc" style="left:570px;top:154.5px;width:109px">XXXXXXXXXXXXXXXXXXXXXXXXXXXXXXXXXXXXXXXX</div>
<div class="xc" style="left:344px;top:166.5px;width:109px">XXXXXXXXXXXXXXXXXXXXXXXXXXXXXXXXXXXXXXXX</div>
<div class="xc" style="left:457px;top:166.5px;width:109px">XXXXXXXXXXXXXXXXXXXXXXXXXXXXXXXXXXXXXXXX</div>
<div class="xc" style="left:570px;top:166.5px;width:109px">XXXXXXXXXXXXXXXXXXXXXXXXXXXXXXXXXXXXXXXX</div>
<div class="xc" style="left:344px;top:179.0px;width:109px">XXXXXXXXXXXXXXXXXXXXXXXXXXXXXXXXXXXXXXXX</div>
<div class="xc" style="left:457px;top:179.0px;width:109px">XXXXXXXXXXXXXXXXXXXXXXXXXXXXXXXXXXXXXXXX</div>
<div class="xc" style="left:570px;top:179.0px;width:109px">XXXXXXXXXXXXXXXXXXXXXXXXXXXXXXXXXXXXXXXX</div>
<div class="xc" style="left:344px;top:191.5px;width:109px">XXXXXXXXXXXXXXXXXXXXXXXXXXXXXXXXXXXXXXXX</div>
<div class="xc" style="left:457px;top:191.5px;width:109px">XXXXXXXXXXXXXXXXXXXXXXXXXXXXXXXXXXXXXXXX</div>
<div class="xc" style="left:570px;top:191.5px;width:109px">XXXXXXXXXXXXXXXXXXXXXXXXXXXXXXXXXXXXXXXX</div>
<div class="xc" style="left:344px;top:203.5px;width:109px">XXXXXXXXXXXXXXXXXXXXXXXXXXXXXXXXXXXXXXXX</div>
<div class="xc" style="left:457px;top:203.5px;width:109px">XXXXXXXXXXXXXXXXXXXXXXXXXXXXXXXXXXXXXXXX</div>
<div class="xc" style="left:570px;top:203.5px;width:109px">XXXXXXXXXXXXXXXXXXXXXXXXXXXXXXXXXXXXXXXX</div>
<div class="xc" style="left:344px;top:215.5px;width:109px">XXXXXXXXXXXXXXXXXXXXXXXXXXXXXXXXXXXXXXXX</div>
<div class="xc" style="left:457px;top:215.5px;width:109px">XXXXXXXXXXXXXXXXXXXXXXXXXXXXXXXXXXXXXXXX</div>
<div class="xc" style="left:570px;top:215.5px;width:109px">XXXXXXXXXXXXXXXXXXXXXXXXXXXXXXXXXXXXXXXX</div>
<div class="xc" style="left:344px;top:227.5px;width:109px">XXXXXXXXXXXXXXXXXXXXXXXXXXXXXXXXXXXXXXXX</div>
<div class="xc" style="left:457px;top:227.5px;width:109px">XXXXXXXXXXXXXXXXXXXXXXXXXXXXXXXXXXXXXXXX</div>
<div class="xc" style="left:570px;top:227.5px;width:109px">XXXXXXXXXXXXXXXXXXXXXXXXXXXXXXXXXXXXXXXX</div>
<div class="xc" style="left:344px;top:239.5px;width:109px">XXXXXXXXXXXXXXXXXXXXXXXXXXXXXXXXXXXXXXXX</div>
<div class="xc" style="left:457px;top:239.5px;width:109px">XXXXXXXXXXXXXXXXXXXXXXXXXXXXXXXXXXXXXXXX</div>
<div class="xc" style="left:570px;top:239.5px;width:109px">XXXXXXXXXXXXXXXXXXXXXXXXXXXXXXXXXXXXXXXX</div>
<div class="a" style="left:881px;top:112px;width:303px;height:25px;background:linear-gradient(#fdfdfd,#f3f3f3);"></div>
<svg style="left:886px;top:117px" width="11" height="14" viewBox="0 0 11 14"><defs><linearGradient id="gn3" x1="0" y1="0" x2="1" y2="1"><stop offset="0.35" stop-color="#fff"/><stop offset="1" stop-color="#b8b8d8"/></linearGradient></defs><path d="M0.5 0.5H7.5L10.5 3.5V13.5H0.5Z" fill="url(#gn3)" stroke="#9a9aa8"/><path d="M7.5 0.5L10.5 3.5V13.5H0.5" fill="none" stroke="#3c4658"/><path d="M7.5 1v2.5H10" fill="#fff" stroke="#3c4658" stroke-width=".8"/></svg>
<svg style="left:907px;top:117px" width="16" height="14" viewBox="0 0 16 14"><rect x="0" y="3" width="12" height="11" fill="#b8b8b8"/><rect x="1" y="4" width="10" height="9" fill="#e4e4e4"/><rect x="0" y="3" width="12" height="2" fill="#c6c6c6"/><rect x="2" y="8" width="2" height="1" fill="#bcbcbc"/><rect x="5" y="8" width="5" height="1" fill="#bcbcbc"/><rect x="2" y="10" width="2" height="1" fill="#bcbcbc"/><rect x="5" y="10" width="5" height="1" fill="#bcbcbc"/><path d="M3 6L6.5 0.5H13L16 0V6.5L13 6H10L8 8Z" fill="#bcbcbc"/><path d="M4 6L6.8 1.5L9.5 5.5L8 7.2L6.3 4.8Z" fill="#dcdcdc"/></svg>
<svg style="left:930px;top:117px" width="16" height="14" viewBox="0 0 16 14"><rect x="0" y="4" width="14" height="9" fill="#c0c0c0"/><rect x="1" y="5" width="12" height="7" fill="#dedede"/><path d="M6 10L7 7.4L13.6 1L15.4 2.8L8.8 9.2Z" fill="#cfcfcf" stroke="#a8a8a8" stroke-width=".8"/><path d="M6 10L7 7.6L8.6 9.2Z" fill="#8c8c8c"/></svg>
<svg style="left:953px;top:117px" width="16" height="14" viewBox="0 0 16 14"><rect x="3" y="0" width="13" height="12.6" fill="#c4c4c4"/><rect x="4" y="0.8" width="3" height="2.9" fill="#e8e8e8"/><rect x="4" y="4.8" width="3" height="2.9" fill="#e8e8e8"/><rect x="4" y="8.8" width="3" height="2.9" fill="#e8e8e8"/><rect x="8" y="0.8" width="3" height="2.9" fill="#e8e8e8"/><rect x="8" y="4.8" width="3" height="2.9" fill="#e8e8e8"/><rect x="8" y="8.8" width="3" height="2.9" fill="#e8e8e8"/><rect x="12" y="0.8" width="3" height="2.9" fill="#e8e8e8"/><rect x="12" y="4.8" width="3" height="2.9" fill="#e8e8e8"/><rect x="12" y="8.8" width="3" height="2.9" fill="#e8e8e8"/><rect x="0" y="5" width="9" height="8.6" fill="#b4b4b4"/><rect x="1" y="6" width="7" height="6.6" fill="#dcdcdc"/><path d="M4 10H10M8 8L10.4 10L8 12" fill="none" stroke="#8c8c8c" stroke-width="1.3"/></svg>
<svg style="left:979px;top:119px" width="9" height="10" viewBox="0 0 9 10"><path d="M0.6 0.4L8.4 9.4M8.4 0.4L0.6 9.4" stroke="#b4b4b4" stroke-width="1.5"/></svg>
<div class="a" style="left:881px;top:137px;width:303px;height:294px;background:#fff;border:1px solid #828488;border-right:none;"></div>
<div class="a" style="left:1167px;top:138px;width:17px;height:292px;background:#f0f0f0;"></div>
<div class="a" style="left:1167px;top:234px;width:15px;height:70px;background:#cdcdcd;"></div>
<svg style="left:1170px;top:144px" width="10" height="10" viewBox="0 0 10 10"><path d="M1.8 6.3L4.5 3.1L7.2 6.3" fill="none" stroke="#505050" stroke-width="2"/></svg>
<svg style="left:1170px;top:416px" width="10" height="10" viewBox="0 0 10 10"><path d="M1.8 2.7L4.5 5.9L7.2 2.7" fill="none" stroke="#505050" stroke-width="2"/></svg>
<div class="dot-v" style="left:932px;top:139px;height:291px"></div>
<div class="dot-h" style="left:934px;top:147px;width:10px"></div>
<svg style="left:944px;top:140px;overflow:hidden" width="7" height="7" viewBox="0 0 7 7"><defs><linearGradient id="gf140" x1="0" y1="0" x2="0" y2="1"><stop offset="0" stop-color="#ffee90"/><stop offset="1" stop-color="#f2c22c"/></linearGradient></defs><rect x="0" y="0" width="7" height="7" fill="url(#gf140)"/><rect x="6" y="0" width="1" height="7" fill="#6e5208"/><rect x="0" y="6" width="7" height="1" fill="#86680c"/><rect x="2" y="3.6" width="2.4" height="1.2" fill="#d8a418"/></svg>
<div class="t g" style="left:963px;top:139px;letter-spacing:-0.342px;">ShippingCountry</div>
<div class="dot-h" style="left:934px;top:163px;width:10px"></div>
<svg style="left:944px;top:156px;overflow:hidden" width="7" height="7" viewBox="0 0 7 7"><defs><linearGradient id="gf156" x1="0" y1="0" x2="0" y2="1"><stop offset="0" stop-color="#ffee90"/><stop offset="1" stop-color="#f2c22c"/></linearGradient></defs><rect x="0" y="0" width="7" height="7" fill="url(#gf156)"/><rect x="6" y="0" width="1" height="7" fill="#6e5208"/><rect x="0" y="6" width="7" height="1" fill="#86680c"/><rect x="2" y="3.6" width="2.4" height="1.2" fill="#d8a418"/></svg>
<div class="t g" style="left:963px;top:155px;letter-spacing:-0.283px;">ShippingLatitude</div>
<div class="dot-h" style="left:934px;top:179px;width:10px"></div>
<svg style="left:944px;top:172px;overflow:hidden" width="7" height="7" viewBox="0 0 7 7"><defs><linearGradient id="gf172" x1="0" y1="0" x2="0" y2="1"><stop offset="0" stop-color="#ffee90"/><stop offset="1" stop-color="#f2c22c"/></linearGradient></defs><rect x="0" y="0" width="7" height="7" fill="url(#gf172)"/><rect x="6" y="0" width="1" height="7" fill="#6e5208"/><rect x="0" y="6" width="7" height="1" fill="#86680c"/><rect x="2" y="3.6" width="2.4" height="1.2" fill="#d8a418"/></svg>
<div class="t g" style="left:963px;top:171px;letter-spacing:-0.378px;">ShippingLongitude</div>
<div class="dot-h" style="left:934px;top:195px;width:10px"></div>
<svg style="left:944px;top:188px;overflow:hidden" width="7" height="7" viewBox="0 0 7 7"><defs><linearGradient id="gf188" x1="0" y1="0" x2="0" y2="1"><stop offset="0" stop-color="#ffee90"/><stop offset="1" stop-color="#f2c22c"/></linearGradient></defs><rect x="0" y="0" width="7" height="7" fill="url(#gf188)"/><rect x="6" y="0" width="1" height="7" fill="#6e5208"/><rect x="0" y="6" width="7" height="1" fill="#86680c"/><rect x="2" y="3.6" width="2.4" height="1.2" fill="#d8a418"/></svg>
<div class="t g" style="left:963px;top:187px;letter-spacing:-0.403px;">ShippingGeocodeAccuracy</div>
<div class="dot-h" style="left:934px;top:211px;width:10px"></div>
<svg style="left:944px;top:204px;overflow:hidden" width="7" height="7" viewBox="0 0 7 7"><defs><linearGradient id="gf204" x1="0" y1="0" x2="0" y2="1"><stop offset="0" stop-color="#ffee90"/><stop offset="1" stop-color="#f2c22c"/></linearGradient></defs><rect x="0" y="0" width="7" height="7" fill="url(#gf204)"/><rect x="6" y="0" width="1" height="7" fill="#6e5208"/><rect x="0" y="6" width="7" height="1" fill="#86680c"/><rect x="2" y="3.6" width="2.4" height="1.2" fill="#d8a418"/></svg>
<div class="t g" style="left:963px;top:203px;letter-spacing:-0.681px;">Phone</div>
<div class="dot-h" style="left:934px;top:227px;width:10px"></div>
<svg style="left:944px;top:220px;overflow:hidden" width="7" height="7" viewBox="0 0 7 7"><defs><linearGradient id="gf220" x1="0" y1="0" x2="0" y2="1"><stop offset="0" stop-color="#ffee90"/><stop offset="1" stop-color="#f2c22c"/></linearGradient></defs><rect x="0" y="0" width="7" height="7" fill="url(#gf220)"/><rect x="6" y="0" width="1" height="7" fill="#6e5208"/><rect x="0" y="6" width="7" height="1" fill="#86680c"/><rect x="2" y="3.6" width="2.4" height="1.2" fill="#d8a418"/></svg>
<div class="t g" style="left:963px;top:219px;letter-spacing:-0.239px;">Fax</div>
<div class="dot-h" style="left:934px;top:243px;width:10px"></div>
<svg style="left:944px;top:236px;overflow:hidden" width="7" height="7" viewBox="0 0 7 7"><defs><linearGradient id="gf236" x1="0" y1="0" x2="0" y2="1"><stop offset="0" stop-color="#ffee90"/><stop offset="1" stop-color="#f2c22c"/></linearGradient></defs><rect x="0" y="0" width="7" height="7" fill="url(#gf236)"/><rect x="6" y="0" width="1" height="7" fill="#6e5208"/><rect x="0" y="6" width="7" height="1" fill="#86680c"/><rect x="2" y="3.6" width="2.4" height="1.2" fill="#d8a418"/></svg>
<div class="t g" style="left:963px;top:235px;letter-spacing:-0.381px;">AccountNumber</div>
<div class="dot-h" style="left:934px;top:259px;width:10px"></div>
<svg style="left:944px;top:252px;overflow:hidden" width="7" height="7" viewBox="0 0 7 7"><defs><linearGradient id="gf252" x1="0" y1="0" x2="0" y2="1"><stop offset="0" stop-color="#ffee90"/><stop offset="1" stop-color="#f2c22c"/></linearGradient></defs><rect x="0" y="0" width="7" height="7" fill="url(#gf252)"/><rect x="6" y="0" width="1" height="7" fill="#6e5208"/><rect x="0" y="6" width="7" height="1" fill="#86680c"/><rect x="2" y="3.6" width="2.4" height="1.2" fill="#d8a418"/></svg>
<div class="t g" style="left:963px;top:251px;letter-spacing:-0.392px;">Website</div>
<div class="dot-h" style="left:934px;top:275px;width:10px"></div>
<svg style="left:944px;top:268px;overflow:hidden" width="7" height="7" viewBox="0 0 7 7"><defs><linearGradient id="gf268" x1="0" y1="0" x2="0" y2="1"><stop offset="0" stop-color="#ffee90"/><stop offset="1" stop-color="#f2c22c"/></linearGradient></defs><rect x="0" y="0" width="7" height="7" fill="url(#gf268)"/><rect x="6" y="0" width="1" height="7" fill="#6e5208"/><rect x="0" y="6" width="7" height="1" fill="#86680c"/><rect x="2" y="3.6" width="2.4" height="1.2" fill="#d8a418"/></svg>
<div class="t g" style="left:963px;top:267px;letter-spacing:-0.261px;">PhotoUrl</div>
<div class="dot-h" style="left:934px;top:291px;width:10px"></div>
<svg style="left:944px;top:284px;overflow:hidden" width="7" height="7" viewBox="0 0 7 7"><defs><linearGradient id="gf284" x1="0" y1="0" x2="0" y2="1"><stop offset="0" stop-color="#ffee90"/><stop offset="1" stop-color="#f2c22c"/></linearGradient></defs><rect x="0" y="0" width="7" height="7" fill="url(#gf284)"/><rect x="6" y="0" width="1" height="7" fill="#6e5208"/><rect x="0" y="6" width="7" height="1" fill="#86680c"/><rect x="2" y="3.6" width="2.4" height="1.2" fill="#d8a418"/></svg>
<div class="t g" style="left:963px;top:283px;letter-spacing:-0.091px;">Sic</div>
<div class="dot-h" style="left:934px;top:307px;width:10px"></div>
<svg style="left:944px;top:300px;overflow:hidden" width="7" height="7" viewBox="0 0 7 7"><defs><linearGradient id="gf300" x1="0" y1="0" x2="0" y2="1"><stop offset="0" stop-color="#ffee90"/><stop offset="1" stop-color="#f2c22c"/></linearGradient></defs><rect x="0" y="0" width="7" height="7" fill="url(#gf300)"/><rect x="6" y="0" width="1" height="7" fill="#6e5208"/><rect x="0" y="6" width="7" height="1" fill="#86680c"/><rect x="2" y="3.6" width="2.4" height="1.2" fill="#d8a418"/></svg>
<div class="t g" style="left:963px;top:299px;letter-spacing:-0.186px;">Industry</div>
<div class="dot-h" style="left:934px;top:323px;width:10px"></div>
<svg style="left:944px;top:316px;overflow:hidden" width="7" height="7" viewBox="0 0 7 7"><defs><linearGradient id="gf316" x1="0" y1="0" x2="0" y2="1"><stop offset="0" stop-color="#ffee90"/><stop offset="1" stop-color="#f2c22c"/></linearGradient></defs><rect x="0" y="0" width="7" height="7" fill="url(#gf316)"/><rect x="6" y="0" width="1" height="7" fill="#6e5208"/><rect x="0" y="6" width="7" height="1" fill="#86680c"/><rect x="2" y="3.6" width="2.4" height="1.2" fill="#d8a418"/></svg>
<div class="t g" style="left:963px;top:315px;letter-spacing:-0.431px;">AnnualRevenue</div>
<div class="dot-h" style="left:934px;top:339px;width:10px"></div>
<svg style="left:944px;top:332px;overflow:hidden" width="7" height="7" viewBox="0 0 7 7"><defs><linearGradient id="gf332" x1="0" y1="0" x2="0" y2="1"><stop offset="0" stop-color="#ffee90"/><stop offset="1" stop-color="#f2c22c"/></linearGradient></defs><rect x="0" y="0" width="7" height="7" fill="url(#gf332)"/><rect x="6" y="0" width="1" height="7" fill="#6e5208"/><rect x="0" y="6" width="7" height="1" fill="#86680c"/><rect x="2" y="3.6" width="2.4" height="1.2" fill="#d8a418"/></svg>
<div class="t g" style="left:963px;top:331px;letter-spacing:-0.489px;">NumberOfEmployees</div>
<div class="dot-h" style="left:934px;top:355px;width:10px"></div>
<svg style="left:944px;top:348px;overflow:hidden" width="7" height="7" viewBox="0 0 7 7"><defs><linearGradient id="gf348" x1="0" y1="0" x2="0" y2="1"><stop offset="0" stop-color="#ffee90"/><stop offset="1" stop-color="#f2c22c"/></linearGradient></defs><rect x="0" y="0" width="7" height="7" fill="url(#gf348)"/><rect x="6" y="0" width="1" height="7" fill="#6e5208"/><rect x="0" y="6" width="7" height="1" fill="#86680c"/><rect x="2" y="3.6" width="2.4" height="1.2" fill="#d8a418"/></svg>
<div class="t g" style="left:963px;top:347px;letter-spacing:-0.462px;">Ownership</div>
<div class="dot-h" style="left:934px;top:371px;width:10px"></div>
<svg style="left:944px;top:364px;overflow:hidden" width="7" height="7" viewBox="0 0 7 7"><defs><linearGradient id="gf364" x1="0" y1="0" x2="0" y2="1"><stop offset="0" stop-color="#ffee90"/><stop offset="1" stop-color="#f2c22c"/></linearGradient></defs><rect x="0" y="0" width="7" height="7" fill="url(#gf364)"/><rect x="6" y="0" width="1" height="7" fill="#6e5208"/><rect x="0" y="6" width="7" height="1" fill="#86680c"/><rect x="2" y="3.6" width="2.4" height="1.2" fill="#d8a418"/></svg>
<div class="t g" style="left:963px;top:363px;letter-spacing:-0.211px;">TickerSymbol</div>
<div class="dot-h" style="left:934px;top:387px;width:10px"></div>
<svg style="left:944px;top:380px;overflow:hidden" width="7" height="7" viewBox="0 0 7 7"><defs><linearGradient id="gf380" x1="0" y1="0" x2="0" y2="1"><stop offset="0" stop-color="#ffee90"/><stop offset="1" stop-color="#f2c22c"/></linearGradient></defs><rect x="0" y="0" width="7" height="7" fill="url(#gf380)"/><rect x="6" y="0" width="1" height="7" fill="#6e5208"/><rect x="0" y="6" width="7" height="1" fill="#86680c"/><rect x="2" y="3.6" width="2.4" height="1.2" fill="#d8a418"/></svg>
<div class="t g" style="left:963px;top:379px;letter-spacing:-0.121px;">Description</div>
<div class="dot-h" style="left:934px;top:403px;width:10px"></div>
<svg style="left:944px;top:396px;overflow:hidden" width="7" height="7" viewBox="0 0 7 7"><defs><linearGradient id="gf396" x1="0" y1="0" x2="0" y2="1"><stop offset="0" stop-color="#ffee90"/><stop offset="1" stop-color="#f2c22c"/></linearGradient></defs><rect x="0" y="0" width="7" height="7" fill="url(#gf396)"/><rect x="6" y="0" width="1" height="7" fill="#6e5208"/><rect x="0" y="6" width="7" height="1" fill="#86680c"/><rect x="2" y="3.6" width="2.4" height="1.2" fill="#d8a418"/></svg>
<div class="t g" style="left:963px;top:395px;letter-spacing:-0.215px;">Rating</div>
<div class="dot-h" style="left:934px;top:419px;width:10px"></div>
<svg style="left:944px;top:412px;overflow:hidden" width="7" height="7" viewBox="0 0 7 7"><defs><linearGradient id="gf412" x1="0" y1="0" x2="0" y2="1"><stop offset="0" stop-color="#ffee90"/><stop offset="1" stop-color="#f2c22c"/></linearGradient></defs><rect x="0" y="0" width="7" height="7" fill="url(#gf412)"/><rect x="6" y="0" width="1" height="7" fill="#6e5208"/><rect x="0" y="6" width="7" height="1" fill="#86680c"/><rect x="2" y="3.6" width="2.4" height="1.2" fill="#d8a418"/></svg>
<div class="t g" style="left:963px;top:411px;letter-spacing:-0.072px;">Site</div>
<div class="a" style="left:948px;top:428px;width:3px;height:2px;background:#fbe68a;"></div>
<div class="a" style="left:881px;top:431px;width:303px;height:30px;background:linear-gradient(#f3f3f3,#fbfbfb 22%,#f8f8f8 60%,#f0f0f0);"></div>
<svg style="left:884px;top:441px" width="16" height="13" viewBox="0 0 16 13"><rect x="0" y="0" width="16" height="13" fill="#bcbcbc"/><rect x="0" y="0" width="16" height="2.4" fill="#a8a8a8"/><rect x="1" y="3" width="14" height="9" fill="#e6e6e6"/><rect x="1" y="5.6" width="14" height="1" fill="#c8c8c8"/><rect x="1" y="8.8" width="14" height="1" fill="#c8c8c8"/><rect x="5" y="3" width="1" height="9" fill="#c8c8c8"/><rect x="10" y="3" width="1" height="9" fill="#c8c8c8"/><rect x="11" y="6" width="1" height="7" fill="#d4d4d4"/><rect x="9" y="9" width="5" height="1" fill="#d4d4d4"/></svg>
<svg style="left:907px;top:440px" width="16" height="14" viewBox="0 0 16 14"><rect x="0" y="3" width="12" height="11" fill="#b8b8b8"/><rect x="1" y="4" width="10" height="9" fill="#e4e4e4"/><rect x="0" y="3" width="12" height="2" fill="#c6c6c6"/><rect x="2" y="8" width="2" height="1" fill="#bcbcbc"/><rect x="5" y="8" width="5" height="1" fill="#bcbcbc"/><rect x="2" y="10" width="2" height="1" fill="#bcbcbc"/><rect x="5" y="10" width="5" height="1" fill="#bcbcbc"/><path d="M3 6L6.5 0.5H13L16 0V6.5L13 6H10L8 8Z" fill="#bcbcbc"/><path d="M4 6L6.8 1.5L9.5 5.5L8 7.2L6.3 4.8Z" fill="#dcdcdc"/></svg>
<svg style="left:930px;top:441px" width="16" height="12" viewBox="0 0 16 12"><path d="M6 0.5H2.5Q0.5 0.5 0.5 3V9Q0.5 11.5 2.5 11.5H6Z" fill="#ececec" stroke="#b0b0b0"/><rect x="5" y="0" width="11" height="12" fill="#a2a2a2"/><rect x="6" y="3" width="9" height="5.6" fill="#f0f0f0"/><rect x="5" y="0" width="1" height="12" fill="#8c8c8c"/></svg>
<div class="a" style="left:881px;top:481px;width:302px;height:288px;background:#fff;border:1px solid #dadada;"></div>
<div class="a" style="left:881px;top:460px;width:130px;height:22px;background:#fff;border:1px solid #dcdcdc;border-bottom:none;"></div>
<div class="t g" style="left:888px;top:462px;letter-spacing:-0.302px;">SampleReport/Sample</div>
<div class="a" style="left:885px;top:482px;width:296px;height:284px;background:#fff;border:1px solid #828488;"></div>
<div class="dot-h" style="left:904px;top:492px;width:6px"></div>
<div class="exp" style="left:894px;top:488px"></div>
<svg style="left:910px;top:485px" width="14" height="13" viewBox="0 0 14 13"><defs><linearGradient id="gl910_485" x1="0" y1="0" x2="1" y2="0"><stop offset="0" stop-color="#3a56c8"/><stop offset="1" stop-color="#9ab0ec"/></linearGradient></defs><rect x="0" y="0" width="14" height="13" fill="#b4c0e8"/><rect x="0" y="0" width="14" height="2.6" fill="url(#gl910_485)"/><rect x="1" y="3" width="12" height="9" fill="#fff"/><rect x="0" y="12" width="14" height="1" fill="#42508c"/><rect x="13" y="3" width="1" height="10" fill="#7a88c0"/><rect x="1" y="5.6" width="12" height="1" fill="#c4ccec"/><rect x="1" y="8.8" width="12" height="1" fill="#c4ccec"/><rect x="4.6" y="3" width="1" height="9" fill="#c4ccec"/><rect x="8.8" y="3" width="1" height="9" fill="#c4ccec"/><rect x="1" y="9.8" width="12" height="2.2" fill="#e4e8fa"/></svg>
<div class="t g" style="left:928.5px;top:484px;">明細<span class="k" style="transform:translateY(0.6px) scale(0.76,1.18);margin-right:-8.64px">リスト</span></div>
<div class="dot-h" style="left:923px;top:508px;width:6px"></div>
<div class="exp" style="left:913px;top:504px"></div>
<svg style="left:929px;top:501px" width="14" height="13" viewBox="0 0 14 13"><defs><linearGradient id="gl929_501" x1="0" y1="0" x2="1" y2="0"><stop offset="0" stop-color="#3a56c8"/><stop offset="1" stop-color="#9ab0ec"/></linearGradient></defs><rect x="0" y="0" width="14" height="13" fill="#b4c0e8"/><rect x="0" y="0" width="14" height="2.6" fill="url(#gl929_501)"/><rect x="1" y="3" width="12" height="9" fill="#fff"/><rect x="0" y="12" width="14" height="1" fill="#42508c"/><rect x="13" y="3" width="1" height="10" fill="#7a88c0"/><rect x="1" y="5.6" width="12" height="1" fill="#c4ccec"/><rect x="1" y="8.8" width="12" height="1" fill="#c4ccec"/><rect x="4.6" y="3" width="1" height="9" fill="#c4ccec"/><rect x="8.8" y="3" width="1" height="9" fill="#c4ccec"/><rect x="1" y="9.8" width="12" height="2.2" fill="#e4e8fa"/></svg>
<svg style="left:933px;top:504px" width="12" height="13" viewBox="0 0 12 13"><text x="0" y="11.8" font-family="Liberation Sans,sans-serif" font-weight="bold" font-size="17.2" fill="#0000e6" stroke="#0000e6" stroke-width=".7" textLength="12" lengthAdjust="spacingAndGlyphs">M</text></svg>
<div class="t g b" style="left:949px;top:500px;letter-spacing:0.257px;">List1[RecordSet_0]</div>
<div class="dot-h" style="left:936px;top:524px;width:12px"></div>
<svg style="left:947px;top:516px" width="16" height="16" viewBox="0 0 16 16"><rect x="0" y="0" width="15" height="2" fill="#b4b4b4"/><rect x="0" y="2" width="15" height="10" fill="#0000c0"/><rect x="1" y="3" width="13" height="8" fill="#fff"/><path d="M2 8.4V5.6H4V8.4H2M5 5.4L6 8.6L7 6L8 8.6L9 5.4M10 8.4V5.6H12V8.4H10" fill="none" stroke="#000" stroke-width=".9"/></svg>
<svg style="left:952px;top:521px" width="12" height="12" viewBox="0 0 12 12"><text x="0" y="10.8" font-family="Liberation Sans,sans-serif" font-weight="bold" font-size="15.8" fill="#0000e6" stroke="#0000e6" stroke-width=".7" textLength="12" lengthAdjust="spacingAndGlyphs">M</text></svg>
<div class="t g b" style="left:968px;top:516px;letter-spacing:0.759px;">列(0)[Id]</div>
<div class="dot-h" style="left:936px;top:540px;width:12px"></div>
<svg style="left:947px;top:532px" width="16" height="16" viewBox="0 0 16 16"><rect x="0" y="0" width="15" height="2" fill="#b4b4b4"/><rect x="0" y="2" width="15" height="10" fill="#0000c0"/><rect x="1" y="3" width="13" height="8" fill="#fff"/><path d="M2 8.4V5.6H4V8.4H2M5 5.4L6 8.6L7 6L8 8.6L9 5.4M10 8.4V5.6H12V8.4H10" fill="none" stroke="#000" stroke-width=".9"/></svg>
<svg style="left:952px;top:537px" width="12" height="12" viewBox="0 0 12 12"><text x="0" y="10.8" font-family="Liberation Sans,sans-serif" font-weight="bold" font-size="15.8" fill="#0000e6" stroke="#0000e6" stroke-width=".7" textLength="12" lengthAdjust="spacingAndGlyphs">M</text></svg>
<div class="t g b" style="left:968px;top:532px;letter-spacing:0.566px;">列(1)[Name]</div>
<div class="dot-h" style="left:936px;top:556px;width:12px"></div>
<svg style="left:947px;top:548px" width="16" height="16" viewBox="0 0 16 16"><rect x="0" y="0" width="15" height="2" fill="#b4b4b4"/><rect x="0" y="2" width="15" height="10" fill="#0000c0"/><rect x="1" y="3" width="13" height="8" fill="#fff"/><path d="M2 8.4V5.6H4V8.4H2M5 5.4L6 8.6L7 6L8 8.6L9 5.4M10 8.4V5.6H12V8.4H10" fill="none" stroke="#000" stroke-width=".9"/></svg>
<svg style="left:952px;top:553px" width="12" height="12" viewBox="0 0 12 12"><text x="0" y="10.8" font-family="Liberation Sans,sans-serif" font-weight="bold" font-size="15.8" fill="#0000e6" stroke="#0000e6" stroke-width=".7" textLength="12" lengthAdjust="spacingAndGlyphs">M</text></svg>
<div class="t g b" style="left:968px;top:548px;letter-spacing:0.332px;">列(2)[AccountNumber]</div>
<div class="dot-v" style="left:917px;top:500px;height:4px"></div>
<div class="dot-v" style="left:936px;top:516px;height:41px"></div>
<div class="a" style="left:1px;top:1px;width:1px;height:791px;background:#9cc6e6;"></div>
<div class="a" style="left:1px;top:112px;width:1px;height:658px;background:#4a8fc9;"></div>
<div class="a" style="left:1184px;top:1px;width:1px;height:791px;background:#5596cc;"></div>
<div class="a" style="left:1184px;top:1px;width:1px;height:30px;background:#cfe6f5;"></div>
<div class="a" style="left:1px;top:770px;width:1184px;height:22px;background:#f0f0f0;"></div>
<div class="a" style="left:224px;top:770px;width:960px;height:1px;background:#dfdfdf;"></div>
<div class="a" style="left:224px;top:112px;width:1px;height:658px;background:#e6e6e6;"></div>
<div class="t ui" style="left:6px;top:774.5px;letter-spacing:-0.211px;">設定<span class="k km" style="transform:translateY(0.3px) scale(0.72,1.15);margin-right:-16.80px">ファイルを</span>開<span class="k km" style="transform:translateY(0.3px) scale(0.72,1.15);margin-right:-13.44px">きました</span>。</div>
<svg style="left:1171px;top:778px" width="12" height="12" viewBox="0 0 12 12" shape-rendering="crispEdges"><g fill="#929292"><rect x="9" y="1" width="2" height="2"/><rect x="5" y="5" width="2" height="2"/><rect x="9" y="5" width="2" height="2"/><rect x="1" y="9" width="2" height="2"/><rect x="5" y="9" width="2" height="2"/><rect x="9" y="9" width="2" height="2"/></g></svg>
</body></html>
